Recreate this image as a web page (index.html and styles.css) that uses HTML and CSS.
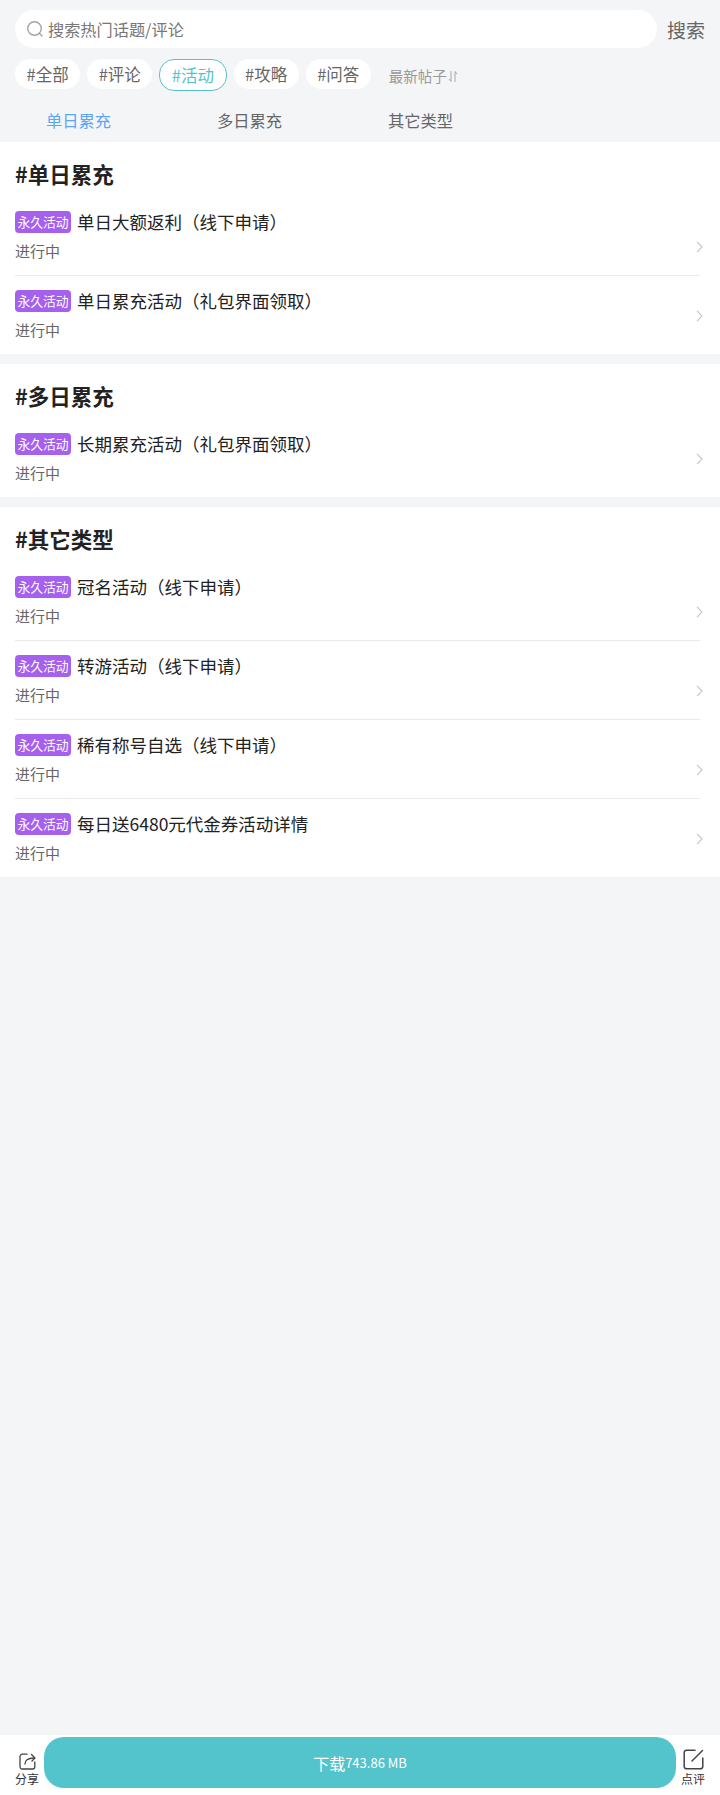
FILE: index.html
```html
<!DOCTYPE html>
<html lang="zh-CN">
<head>
  <meta charset="UTF-8">
  <meta name="viewport" content="width=device-width, initial-scale=1.0">
  <title>活动</title>
  <link rel="stylesheet" href="styles.css">
</head>
<body>
  <div class="page">
    <div class="search-row">
      <div class="search-box">
        <svg class="search-icon" width="18" height="18" viewBox="0 0 18 18" fill="none">
          <circle cx="8.5" cy="8.5" r="6.8" stroke="#a3a3a3" stroke-width="1.4"/>
          <path d="M13.6 13.6l2.4 2.4" stroke="#a3a3a3" stroke-width="1.4" stroke-linecap="round"/>
        </svg>
        <span>搜索热门话题/评论</span>
      </div>
      <span class="search-btn">搜索</span>
    </div>

    <div class="tag-row">
      <span class="tag">#全部</span>
      <span class="tag">#评论</span>
      <span class="tag tag-active">#活动</span>
      <span class="tag">#攻略</span>
      <span class="tag">#问答</span>
      <span class="sort">最新帖子<svg class="sort-arrows" width="10" height="11" viewBox="0 0 10 11" fill="none" stroke="#a8a8a8" stroke-width="1"><path d="M3 0v10.500L1 8"/><path d="M7 11V.5L9 3"/></svg></span>
    </div>

    <div class="tabs">
      <span class="tab tab-active">单日累充</span>
      <span class="tab">多日累充</span>
      <span class="tab">其它类型</span>
    </div>

    <section class="group">
      <h2>#单日累充</h2>
      <a class="item">
        <div class="item-main">
          <div class="item-title"><span class="badge">永久活动</span>单日大额返利（线下申请）</div>
          <div class="item-status">进行中</div>
        </div>
        <svg class="chevron" width="7" height="12" viewBox="0 0 7 12" fill="none"><path d="M1 .8L6 6l-5 5.200" stroke="#c8c8c8" stroke-width="1.200"/></svg>
      </a>
      <a class="item">
        <div class="item-main">
          <div class="item-title"><span class="badge">永久活动</span>单日累充活动（礼包界面领取）</div>
          <div class="item-status">进行中</div>
        </div>
        <svg class="chevron" width="7" height="12" viewBox="0 0 7 12" fill="none"><path d="M1 .8L6 6l-5 5.200" stroke="#c8c8c8" stroke-width="1.200"/></svg>
      </a>
    </section>

    <section class="group">
      <h2>#多日累充</h2>
      <a class="item">
        <div class="item-main">
          <div class="item-title"><span class="badge">永久活动</span>长期累充活动（礼包界面领取）</div>
          <div class="item-status">进行中</div>
        </div>
        <svg class="chevron" width="7" height="12" viewBox="0 0 7 12" fill="none"><path d="M1 .8L6 6l-5 5.200" stroke="#c8c8c8" stroke-width="1.200"/></svg>
      </a>
    </section>

    <section class="group">
      <h2>#其它类型</h2>
      <a class="item">
        <div class="item-main">
          <div class="item-title"><span class="badge">永久活动</span>冠名活动（线下申请）</div>
          <div class="item-status">进行中</div>
        </div>
        <svg class="chevron" width="7" height="12" viewBox="0 0 7 12" fill="none"><path d="M1 .8L6 6l-5 5.200" stroke="#c8c8c8" stroke-width="1.200"/></svg>
      </a>
      <a class="item">
        <div class="item-main">
          <div class="item-title"><span class="badge">永久活动</span>转游活动（线下申请）</div>
          <div class="item-status">进行中</div>
        </div>
        <svg class="chevron" width="7" height="12" viewBox="0 0 7 12" fill="none"><path d="M1 .8L6 6l-5 5.200" stroke="#c8c8c8" stroke-width="1.200"/></svg>
      </a>
      <a class="item">
        <div class="item-main">
          <div class="item-title"><span class="badge">永久活动</span>稀有称号自选（线下申请）</div>
          <div class="item-status">进行中</div>
        </div>
        <svg class="chevron" width="7" height="12" viewBox="0 0 7 12" fill="none"><path d="M1 .8L6 6l-5 5.200" stroke="#c8c8c8" stroke-width="1.200"/></svg>
      </a>
      <a class="item">
        <div class="item-main">
          <div class="item-title"><span class="badge">永久活动</span>每日送6480元代金券活动详情</div>
          <div class="item-status">进行中</div>
        </div>
        <svg class="chevron" width="7" height="12" viewBox="0 0 7 12" fill="none"><path d="M1 .8L6 6l-5 5.200" stroke="#c8c8c8" stroke-width="1.200"/></svg>
      </a>
    </section>

    <footer class="bottom-bar">
      <div class="bar-action bar-share">
        <svg width="17" height="17" viewBox="0 0 17 17" fill="none" stroke="#444" stroke-width="1.300" stroke-linecap="round" stroke-linejoin="round">
          <path d="M8 1.200H3.200a2.200 2.200 0 0 0-2.200 2.200v10.400A2.200 2.200 0 0 0 3.200 16h10.400a2.200 2.200 0 0 0 2.200-2.200V9"/>
          <path d="M6 11c0-3.600 2.400-6 9-6"/>
          <path d="M12.500 1.500L16 5l-3 3"/>
        </svg>
        <span>分享</span>
      </div>
      <div class="download"><span>下载</span><span class="download-size">743.86 MB</span></div>
      <div class="bar-action bar-comment">
        <svg width="21" height="21" viewBox="0 0 21 21" fill="none" stroke="#444" stroke-width="1.500" stroke-linecap="round">
          <path d="M12 1.200H3.500A2.300 2.300 0 0 0 1.200 3.500v14a2.300 2.300 0 0 0 2.300 2.300h14a2.300 2.300 0 0 0 2.300-2.300V9"/>
          <path d="M9 12L19.500 1.500"/>
        </svg>
        <span>点评</span>
      </div>
    </footer>
  </div>
</body>
</html>
```

FILE: styles.css
```css
* {
  box-sizing: border-box;
}

html,
body {
  margin: 0;
  padding: 0;
}

body {
  font-family: "Noto Sans CJK SC", "Liberation Sans", sans-serif;
  background-color: #f4f5f7;
  color: #222;
}

.page {
  display: flex;
  flex-direction: column;
  height: 1795px;
}

/* search */
.search-row {
  display: flex;
  align-items: center;
  padding: 10px 15px 0;
}

.search-box {
  flex: 1;
  display: flex;
  align-items: center;
  gap: 4px;
  height: 38px;
  padding-left: 11px;
  background: #fff;
  border-radius: 19px;
  font-size: 16.2px;
  color: #777;
}

.search-btn {
  width: 38px;
  margin-left: 10px;
  font-size: 19px;
  line-height: 1;
  color: #666;
  white-space: nowrap;
}

/* tags */
.tag-row {
  display: flex;
  align-items: flex-start;
  gap: 7px;
  padding: 0 15px;
  margin-top: 11px;
}

.tag {
  height: 30px;
  padding: 0 11.5px;
  background: #fff;
  border-radius: 15px;
  font-size: 16.5px;
  line-height: 30px;
  color: #666;
}

.tag-active {
  height: 32px;
  line-height: 30px;
  border: 1px solid #53c4cc;
  color: #53c4cc;
}

.sort {
  display: flex;
  align-items: center;
  margin: 7px 0 0 11px;
  font-size: 14.5px;
  line-height: 20px;
  color: #999;
}

.sort-arrows {
  margin-left: 1px;
}

/* tabs */
.tabs {
  display: flex;
  height: 51px;
  align-items: center;
  padding: 6px 0 0 46px;
  gap: 106px;
}

.tab {
  font-size: 16.25px;
  color: #666;
}

.tab-active {
  color: #5aa5f5;
}

/* groups */
.group {
  background: #fff;
  margin-bottom: 10px;
}

.group:last-of-type {
  margin-bottom: 0;
}

.group h2 {
  margin: 0;
  padding: 16px 15px 0;
  height: 55px;
  font-size: 21.5px;
  font-weight: 700;
  line-height: 32px;
  color: #222;
}

.item {
  display: flex;
  align-items: flex-start;
  margin-left: 15px;
  width: 685px;
  height: 79px;
  padding-top: 14px;
  border-bottom: 1px solid #e9e9e9;
}

.item:last-child {
  height: 78px;
  border-bottom: 0;
}

.item-main {
  flex: 1;
}

.item-title {
  display: flex;
  align-items: center;
  height: 22px;
  font-size: 17.5px;
  line-height: 22px;
  color: #222;
}

.badge {
  width: 56px;
  height: 22px;
  margin-right: 6px;
  background: #a560ee;
  border-radius: 4px;
  font-size: 12.8px;
  line-height: 22px;
  text-align: center;
  color: #fff;
  white-space: nowrap;
}

.item-status {
  margin-top: 7px;
  font-size: 15px;
  line-height: 22px;
  color: #666;
}

.chevron {
  flex: none;
  margin-top: 30px;
  margin-right: -3px;
}

.item:last-child .chevron {
  margin-top: 20px;
}

/* bottom bar */
.bottom-bar {
  display: flex;
  align-items: stretch;
  margin-top: auto;
  height: 60px;
  padding: 2px 0 7px;
  background: #fff;
}

.bar-action {
  display: flex;
  flex-direction: column;
  align-items: center;
  justify-content: flex-end;
  gap: 2px;
  width: 44px;
  padding-bottom: 2px;
  font-size: 12px;
  line-height: 14px;
  color: #333;
}

.bar-share {
  padding-left: 10px;
}

.bar-comment {
  padding-right: 10px;
}

.download {
  flex: 1;
  display: flex;
  align-items: center;
  justify-content: center;
  background: #53c4cc;
  border-radius: 20px;
  color: #fff;
  font-size: 16px;
}

.download-size {
  font-size: 13px;
}
```
